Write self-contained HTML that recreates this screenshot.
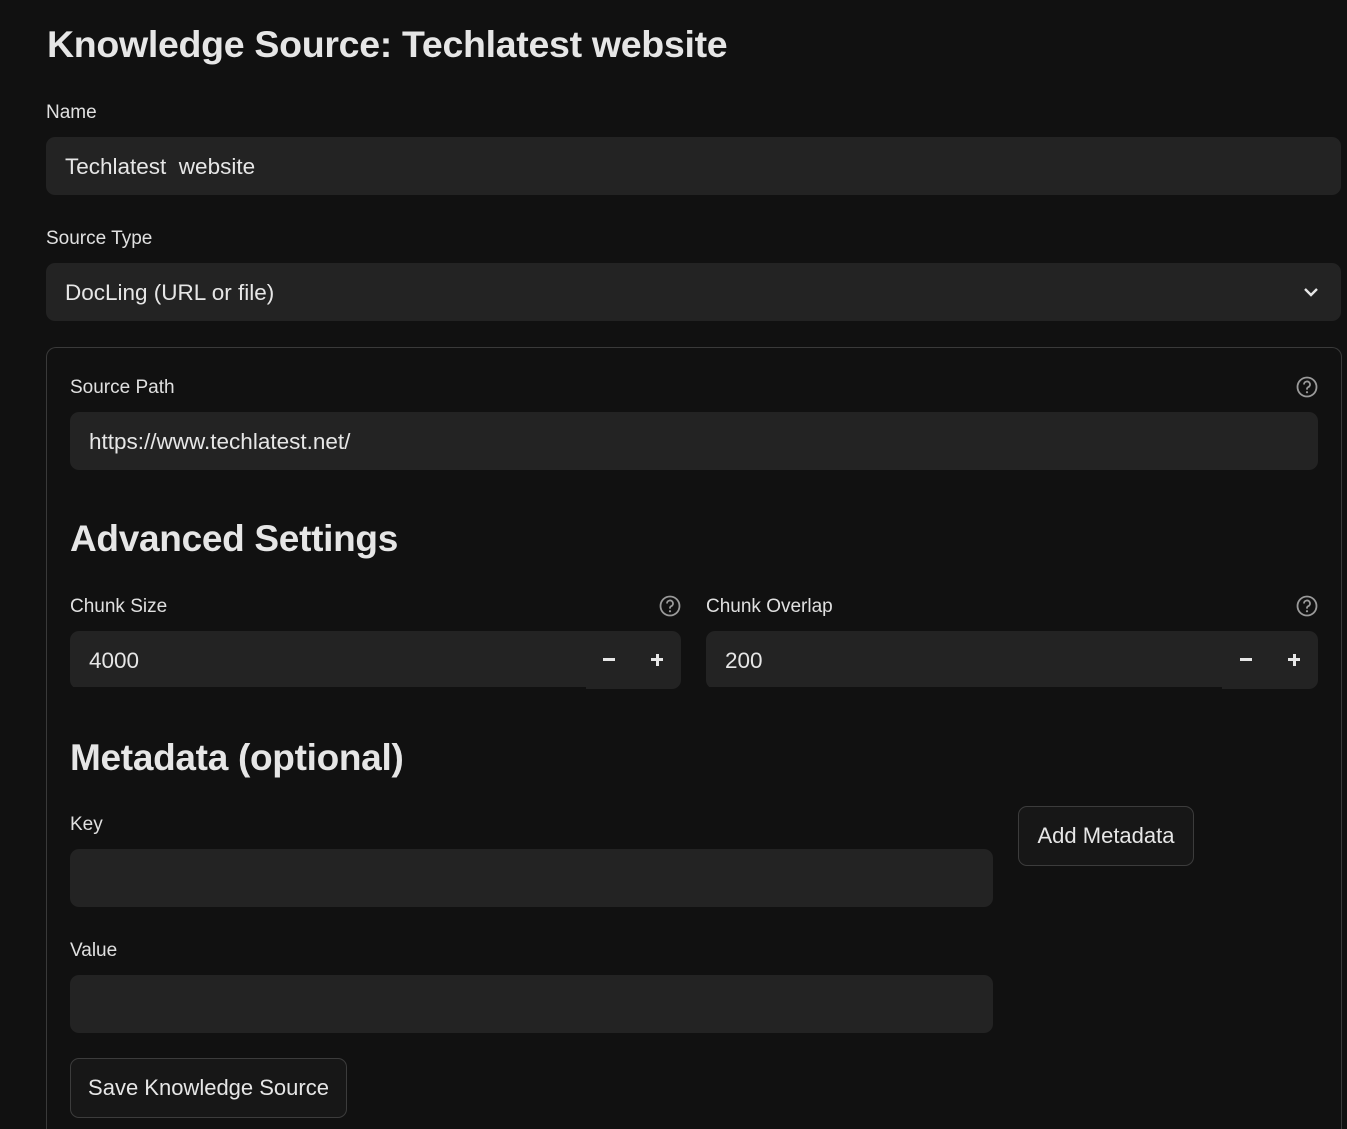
<!DOCTYPE html>
<html style="width:1347px;height:1129px;overflow:hidden"><head><meta charset="utf-8"><style>
*{box-sizing:border-box;margin:0;padding:0}
body{width:1347px;height:1129px;background:#111111;font-family:"Liberation Sans",sans-serif;color:#e6e6e6;position:relative;overflow:hidden}
.a{position:absolute}
.lbl{font-size:19px;color:#e0e0e0;line-height:24px}
.inp{background:#232323;border-radius:9px;font-size:22.5px;color:#e6e6e6;padding-left:19px;padding-top:2px;display:flex;align-items:center}
.h{font-weight:bold;color:#e6e6e6;letter-spacing:-0.3px}
.help{width:22px;height:22px}
.btn{border:1px solid #3c3c3c;border-radius:9px;background:#171717;font-size:22px;display:flex;align-items:center;justify-content:center;color:#e6e6e6}
</style></head><body>
<div class="a h" style="left:47px;top:21px;font-size:37.5px;line-height:46px">Knowledge Source: Techlatest website</div>

<div class="a lbl" style="left:46px;top:101px">Name</div>
<div class="a inp" style="left:46px;top:137px;width:1295px;height:58px">Techlatest&nbsp; website</div>

<div class="a lbl" style="left:46px;top:227px">Source Type</div>
<div class="a inp" style="left:46px;top:263px;width:1295px;height:58px">DocLing (URL or file)
<svg class="a" style="left:1256px;top:20px" width="18" height="18" viewBox="0 0 18 18"><path d="M3 6l6 6 6-6" stroke="#e6e6e6" stroke-width="2.4" fill="none"/></svg></div>

<div class="a" style="left:46px;top:347px;width:1296px;height:782px;border:1px solid #3a3a3a;border-bottom:none;border-radius:10px 10px 0 0"></div>

<div class="a lbl" style="left:70px;top:376px">Source Path</div>
<svg class="a help" style="left:1296px;top:376px" viewBox="0 0 22 22"><circle cx="11" cy="11" r="9.5" stroke="#9a9a9a" stroke-width="1.8" fill="none"/><path d="M8 8.5a3 3 0 1 1 4.2 2.7c-.8.4-1.2 1-1.2 1.8v.6" stroke="#9a9a9a" stroke-width="1.8" fill="none"/><circle cx="11" cy="16.2" r="1.1" fill="#9a9a9a"/></svg>
<div class="a inp" style="left:70px;top:412px;width:1248px;height:58px">https://www.techlatest.net/</div>

<div class="a h" style="left:70px;top:514px;font-size:37px;line-height:50px">Advanced Settings</div>

<div class="a lbl" style="left:70px;top:595px">Chunk Size</div>
<svg class="a help" style="left:659px;top:595px" viewBox="0 0 22 22"><circle cx="11" cy="11" r="9.5" stroke="#9a9a9a" stroke-width="1.8" fill="none"/><path d="M8 8.5a3 3 0 1 1 4.2 2.7c-.8.4-1.2 1-1.2 1.8v.6" stroke="#9a9a9a" stroke-width="1.8" fill="none"/><circle cx="11" cy="16.2" r="1.1" fill="#9a9a9a"/></svg>
<div class="a inp" style="left:70px;top:631px;width:611px;height:58px">4000</div>
<div class="a" style="left:70px;top:687px;width:516px;height:2px;background:#111"></div>
<div class="a" style="left:603px;top:658px;width:12px;height:3px;background:#e6e6e6"></div>
<div class="a" style="left:651px;top:658px;width:12px;height:3px;background:#e6e6e6"></div>
<div class="a" style="left:655.5px;top:654px;width:3px;height:12px;background:#e6e6e6"></div>

<div class="a lbl" style="left:706px;top:595px">Chunk Overlap</div>
<svg class="a help" style="left:1296px;top:595px" viewBox="0 0 22 22"><circle cx="11" cy="11" r="9.5" stroke="#9a9a9a" stroke-width="1.8" fill="none"/><path d="M8 8.5a3 3 0 1 1 4.2 2.7c-.8.4-1.2 1-1.2 1.8v.6" stroke="#9a9a9a" stroke-width="1.8" fill="none"/><circle cx="11" cy="16.2" r="1.1" fill="#9a9a9a"/></svg>
<div class="a inp" style="left:706px;top:631px;width:612px;height:58px">200</div>
<div class="a" style="left:706px;top:687px;width:516px;height:2px;background:#111"></div>
<div class="a" style="left:1240px;top:658px;width:12px;height:3px;background:#e6e6e6"></div>
<div class="a" style="left:1288px;top:658px;width:12px;height:3px;background:#e6e6e6"></div>
<div class="a" style="left:1292.5px;top:654px;width:3px;height:12px;background:#e6e6e6"></div>

<div class="a h" style="left:70px;top:733px;font-size:37px;line-height:50px">Metadata (optional)</div>

<div class="a lbl" style="left:70px;top:813px">Key</div>
<div class="a inp" style="left:70px;top:849px;width:923px;height:58px"></div>
<div class="a btn" style="left:1018px;top:806px;width:176px;height:60px">Add Metadata</div>

<div class="a lbl" style="left:70px;top:939px">Value</div>
<div class="a inp" style="left:70px;top:975px;width:923px;height:58px"></div>

<div class="a btn" style="left:70px;top:1058px;width:277px;height:60px">Save Knowledge Source</div>
</body></html>
